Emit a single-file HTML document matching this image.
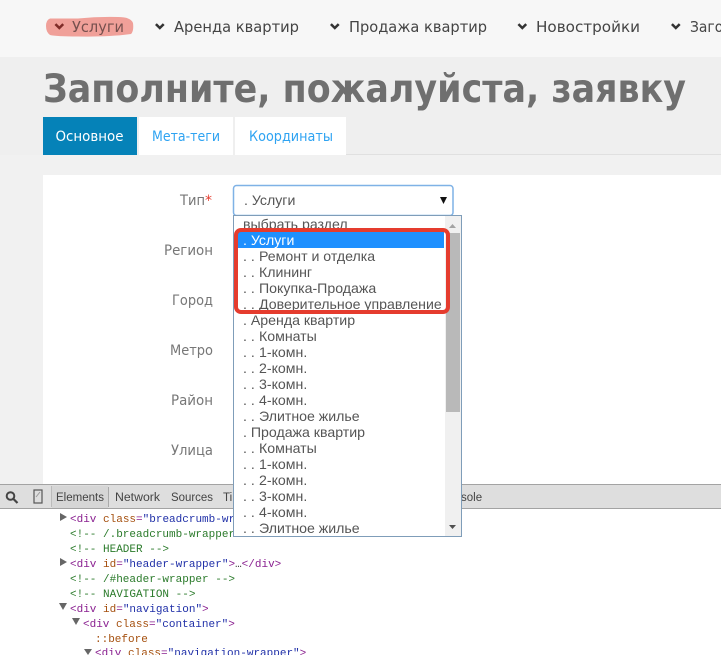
<!DOCTYPE html>
<html lang="ru"><head><meta charset="utf-8"><title>Заявка</title>
<style>
html,body{margin:0;padding:0;width:721px;height:655px;overflow:hidden;background:#fff}
svg{display:block}
.n{font:15px "DejaVu Sans","Liberation Sans",sans-serif;fill:#444}
.l{font:14px "DejaVu Sans","Liberation Sans",sans-serif;fill:#777}
.o{font:14.15px "Liberation Sans",Arial,sans-serif;fill:#555}
.d{font:11px "Liberation Mono",monospace;fill:#2a7a2a;white-space:pre}
.p{fill:#8a2090}.a{fill:#a5500f}.v{fill:#2030a8}
</style></head>
<body>
<svg xmlns="http://www.w3.org/2000/svg" width="721" height="655" viewBox="0 0 721 655">
<defs>
<path id="c" d="M0 0l1.800-1.800 3 3 3-3 1.800 1.800-4.800 4.800z"/>
<clipPath id="dd"><rect x="234" y="216" width="211" height="320"/></clipPath>
</defs>
<rect width="721" height="655" fill="#fff"/>
<rect width="721" height="57" fill="#f7f7f7"/>
<rect y="57" width="721" height="98" fill="#efefef"/>
<rect y="155" width="721" height="329" fill="#f1f1f1"/>
<rect x="346" y="154" width="375" height="1" fill="#e0e0e0"/>
<rect x="43" y="175" width="678" height="309" fill="#fff"/>

<!-- nav -->
<path d="M50 18.500h28q20-2 40-1.500q13 0 15 6q1 8-2 11q-20 3-53 2.500q-22 0-28-1.500q-4-3-4-9q0-6 4-7.500z" fill="#f0a099"/>
<use href="#c" x="54.500" y="25" fill="#7f2c28"/>
<use href="#c" x="155" y="25" fill="#333"/>
<use href="#c" x="330" y="25" fill="#333"/>
<use href="#c" x="517.500" y="25" fill="#333"/>
<use href="#c" x="671" y="25" fill="#333"/>
<text class="n" x="72" y="32" textLength="52" lengthAdjust="spacingAndGlyphs" style="fill:#76504e">Услуги</text>
<text class="n" x="174" y="32" textLength="125" lengthAdjust="spacingAndGlyphs">Аренда квартир</text>
<text class="n" x="349" y="32" textLength="138" lengthAdjust="spacingAndGlyphs">Продажа квартир</text>
<text class="n" x="536" y="32" textLength="104" lengthAdjust="spacingAndGlyphs">Новостройки</text>
<text class="n" x="690" y="32" textLength="42" lengthAdjust="spacingAndGlyphs">Загор</text>

<!-- title -->
<text x="43" y="102" textLength="643" lengthAdjust="spacingAndGlyphs" style="font:bold 39px 'DejaVu Sans','Liberation Sans',sans-serif;fill:#6f6f6f">Заполните, пожалуйста, заявку</text>

<!-- tabs -->
<rect x="43" y="117" width="94" height="38" fill="#0582b8"/>
<rect x="139" y="117" width="94" height="38" fill="#fff"/>
<rect x="235" y="117" width="111" height="38" fill="#fff"/>
<text x="55.500" y="141" textLength="68" lengthAdjust="spacingAndGlyphs" style="font:14px 'DejaVu Sans',sans-serif;fill:#fff">Основное</text>
<text x="152" y="141" textLength="68" lengthAdjust="spacingAndGlyphs" style="font:14px 'DejaVu Sans',sans-serif;fill:#2ea3f2">Мета-теги</text>
<text x="249" y="141" textLength="84" lengthAdjust="spacingAndGlyphs" style="font:14px 'DejaVu Sans',sans-serif;fill:#2ea3f2">Координаты</text>

<!-- labels -->
<text class="l" x="180" y="205" textLength="25" lengthAdjust="spacingAndGlyphs">Тип</text>
<text x="205" y="205" style="font:14px 'DejaVu Sans',sans-serif;fill:#e53c2e">*</text>
<text class="l" x="164" y="255" textLength="49" lengthAdjust="spacingAndGlyphs">Регион</text>
<text class="l" x="172" y="305" textLength="41" lengthAdjust="spacingAndGlyphs">Город</text>
<text class="l" x="170" y="355" textLength="43" lengthAdjust="spacingAndGlyphs">Метро</text>
<text class="l" x="171" y="405" textLength="42" lengthAdjust="spacingAndGlyphs">Район</text>
<text class="l" x="171" y="455" textLength="42" lengthAdjust="spacingAndGlyphs">Улица</text>

<!-- devtools -->
<rect y="484" width="721" height="25" fill="#dedede"/>
<rect y="484" width="721" height="1" fill="#a3a3a3"/>
<rect y="508" width="721" height="1" fill="#a3a3a3"/>
<circle cx="10.500" cy="496" r="3.800" fill="none" stroke="#444" stroke-width="2"/>
<path d="M13.500 499l4 4" stroke="#444" stroke-width="2.200"/>
<rect x="34" y="490" width="8" height="13" fill="none" stroke="#555" stroke-width="1.200"/>
<path d="M36 497l4-5" stroke="#999"/>
<rect x="51" y="486" width="1" height="21" fill="#bbb"/>
<rect x="52" y="486" width="56" height="22" fill="#d6d6d6"/>
<rect x="108" y="487" width="1" height="20" fill="#aaa"/>
<g style="font:11.500px 'Liberation Sans',sans-serif;fill:#444">
<text x="56" y="501" textLength="48" lengthAdjust="spacingAndGlyphs">Elements</text>
<text x="115" y="501" textLength="45" lengthAdjust="spacingAndGlyphs">Network</text>
<text x="171" y="501" textLength="42" lengthAdjust="spacingAndGlyphs">Sources</text>
<text x="223" y="501">Ti</text>
<text x="461" y="501">sole</text>
</g>
<g fill="#666">
<path d="M60 513l7 4-7 4z"/><path d="M60 558l7 4-7 4z"/>
<path d="M59 603h8l-4 7z"/><path d="M72 618h8l-4 7z"/><path d="M84 649h8l-4 6z"/>
</g>
<g>
<text class="d" x="70" y="522"><tspan class="p">&lt;div</tspan> <tspan class="a">class</tspan><tspan class="p">=</tspan><tspan class="v">"breadcrumb-wrapper"</tspan></text>
<text class="d" x="70" y="537">&lt;!-- /.breadcrumb-wrapper --&gt;</text>
<text class="d" x="70" y="552">&lt;!-- HEADER --&gt;</text>
<text class="d" x="70" y="567"><tspan class="p">&lt;div</tspan> <tspan class="a">id</tspan><tspan class="p">=</tspan><tspan class="v">"header-wrapper"</tspan><tspan class="p">&gt;</tspan><tspan style="fill:#333">…</tspan><tspan class="p">&lt;/div&gt;</tspan></text>
<text class="d" x="70" y="582">&lt;!-- /#header-wrapper --&gt;</text>
<text class="d" x="70" y="597">&lt;!-- NAVIGATION --&gt;</text>
<text class="d" x="70" y="612"><tspan class="p">&lt;div</tspan> <tspan class="a">id</tspan><tspan class="p">=</tspan><tspan class="v">"navigation"</tspan><tspan class="p">&gt;</tspan></text>
<text class="d" x="83" y="627"><tspan class="p">&lt;div</tspan> <tspan class="a">class</tspan><tspan class="p">=</tspan><tspan class="v">"container"</tspan><tspan class="p">&gt;</tspan></text>
<text class="d" x="95" y="642" style="fill:#a5500f">::before</text>
<text class="d" x="95" y="656"><tspan class="p">&lt;div</tspan> <tspan class="a">class</tspan><tspan class="p">=</tspan><tspan class="v">"navigation-wrapper"</tspan><tspan class="p">&gt;</tspan></text>
</g>

<!-- select -->
<rect x="233.500" y="185.500" width="219.500" height="30" rx="3" fill="#fff" stroke="#7fb2e6" stroke-width="1.500"/>
<text class="o" x="244" y="205">. Услуги</text>
<path d="M440 197h7l-3.500 7z" fill="#111"/>

<!-- dropdown -->
<rect x="233.500" y="215.500" width="228" height="321" fill="#fff" stroke="#7f9db9"/>
<rect x="445" y="216" width="16" height="320" fill="#f0f0f0"/>
<rect x="446" y="233" width="14" height="179" fill="#b9b9b9"/>
<path d="M449 228l3.500-4 3.500 4z" fill="#a3a3a3"/>
<path d="M449 525h7l-3.500 4z" fill="#505050"/>
<rect x="238" y="232" width="206" height="16" fill="#1e90ff"/>
<g clip-path="url(#dd)">
<text class="o" x="243" y="229">выбрать раздел</text>
<text class="o" x="243" y="245" style="fill:#fff">. Услуги</text>
<text class="o" x="243" y="261">. .</text><text class="o" x="259" y="261">Ремонт и отделка</text>
<text class="o" x="243" y="277">. .</text><text class="o" x="259" y="277">Клининг</text>
<text class="o" x="243" y="293">. .</text><text class="o" x="259" y="293">Покупка-Продажа</text>
<text class="o" x="243" y="309">. .</text><text class="o" x="259" y="309">Доверительное управление</text>
<text class="o" x="243" y="325">. Аренда квартир</text>
<text class="o" x="243" y="341">. .</text><text class="o" x="259" y="341">Комнаты</text>
<text class="o" x="243" y="357">. .</text><text class="o" x="259" y="357">1-комн.</text>
<text class="o" x="243" y="373">. .</text><text class="o" x="259" y="373">2-комн.</text>
<text class="o" x="243" y="389">. .</text><text class="o" x="259" y="389">3-комн.</text>
<text class="o" x="243" y="405">. .</text><text class="o" x="259" y="405">4-комн.</text>
<text class="o" x="243" y="421">. .</text><text class="o" x="259" y="421">Элитное жилье</text>
<text class="o" x="243" y="437">. Продажа квартир</text>
<text class="o" x="243" y="453">. .</text><text class="o" x="259" y="453">Комнаты</text>
<text class="o" x="243" y="469">. .</text><text class="o" x="259" y="469">1-комн.</text>
<text class="o" x="243" y="485">. .</text><text class="o" x="259" y="485">2-комн.</text>
<text class="o" x="243" y="501">. .</text><text class="o" x="259" y="501">3-комн.</text>
<text class="o" x="243" y="517">. .</text><text class="o" x="259" y="517">4-комн.</text>
<text class="o" x="243" y="533">. .</text><text class="o" x="259" y="533">Элитное жилье</text>
</g>
<!-- red highlight -->
<rect x="236" y="230" width="212" height="82" rx="5" fill="none" stroke="#e53c2e" stroke-width="4"/>
</svg>
</body></html>
